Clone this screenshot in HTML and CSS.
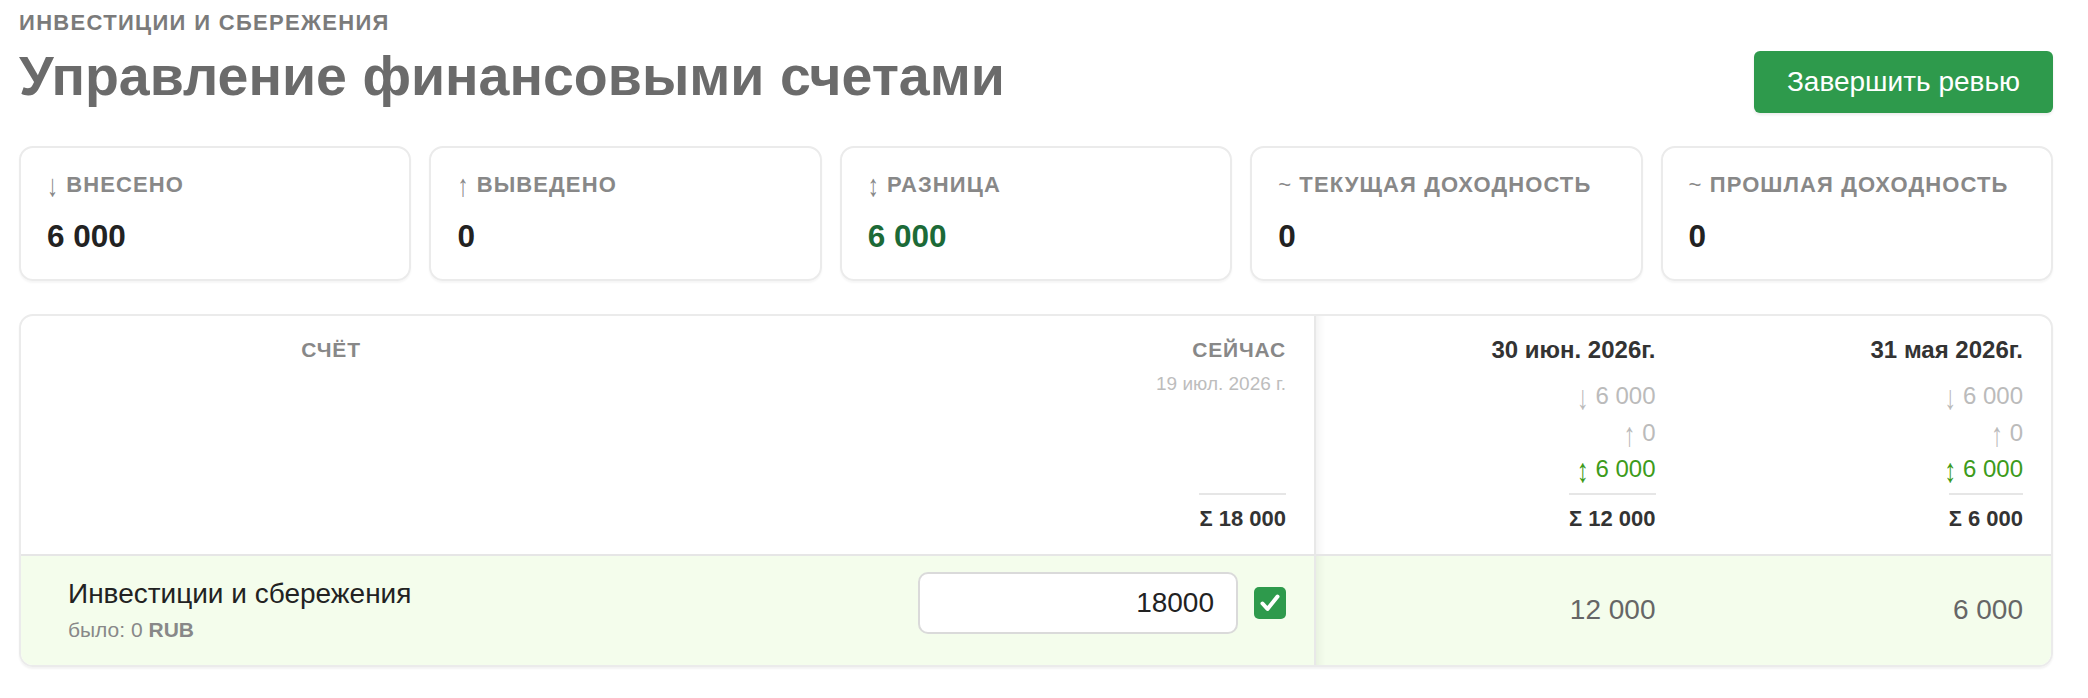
FILE: index.html
```html
<!DOCTYPE html>
<html lang="ru">
<head>
    <meta charset="UTF-8">
    <meta name="viewport" content="width=device-width, initial-scale=1.0">
    <title>Управление финансовыми счетами</title>
    <link rel="stylesheet" href="styles.css">
</head>
<body>

<div class="page">

    <header class="page-head">
        <div class="eyebrow">Инвестиции и сбережения</div>
        <div class="head-row">
            <h1>Управление финансовыми счетами</h1>
            <button class="btn-finish">Завершить ревью</button>
        </div>
    </header>

    <section class="stats">
        <div class="stat">
            <div class="stat-label"><span class="arr">↓</span> Внесено</div>
            <div class="stat-value">6&nbsp;000</div>
        </div>
        <div class="stat">
            <div class="stat-label"><span class="arr">↑</span> Выведено</div>
            <div class="stat-value">0</div>
        </div>
        <div class="stat">
            <div class="stat-label"><span class="arr">↕</span> Разница</div>
            <div class="stat-value positive">6&nbsp;000</div>
        </div>
        <div class="stat">
            <div class="stat-label"><span class="tilde">~</span> Текущая доходность</div>
            <div class="stat-value">0</div>
        </div>
        <div class="stat">
            <div class="stat-label"><span class="tilde">~</span> Прошлая доходность</div>
            <div class="stat-value">0</div>
        </div>
    </section>

    <section class="review">
        <!-- header row -->
        <div class="th th-account">Счёт</div>
        <div class="th th-now">
            <div class="th-title">Сейчас</div>
            <div class="th-date">19 июл. 2026 г.</div>
            <div class="th-sum">Σ 18&nbsp;000</div>
        </div>
        <div class="th th-period first-period">
            <div class="th-period-title">30 июн. 2026г.</div>
            <div class="flow in"><span class="arr">↓</span> 6&nbsp;000</div>
            <div class="flow out"><span class="arr">↑</span> 0</div>
            <div class="flow diff"><span class="arr">↕</span> 6&nbsp;000</div>
            <div class="th-sum">Σ 12&nbsp;000</div>
        </div>
        <div class="th th-period">
            <div class="th-period-title">31 мая 2026г.</div>
            <div class="flow in"><span class="arr">↓</span> 6&nbsp;000</div>
            <div class="flow out"><span class="arr">↑</span> 0</div>
            <div class="flow diff"><span class="arr">↕</span> 6&nbsp;000</div>
            <div class="th-sum">Σ 6&nbsp;000</div>
        </div>

        <!-- account row -->
        <div class="td td-account">
            <div class="account-name">Инвестиции и сбережения</div>
            <div class="account-was">было: 0 <b>RUB</b></div>
        </div>
        <div class="td td-now">
            <input class="amount-input" type="text" value="18000">
            <span class="check">
                <svg width="32" height="32" viewBox="0 0 32 32">
                    <rect width="32" height="32" rx="5" fill="#2e9a4c"/>
                    <path d="M8.5 16.5 L13.5 22 L23.5 9.5" fill="none" stroke="#fff" stroke-width="4" stroke-linecap="round" stroke-linejoin="round"/>
                </svg>
            </span>
        </div>
        <div class="td td-period first-period">12&nbsp;000</div>
        <div class="td td-period">6&nbsp;000</div>
    </section>

</div>

</body>
</html>
```

FILE: styles.css
```css
* {
    box-sizing: border-box;
}

body {
    margin: 0;
    font-family: "Liberation Sans", Arial, sans-serif;
    color: #222;
    background-color: #fff;
}

.page {
    padding: 10px 35px 40px 19px;
}

/* thin arrows, stretched a bit to reach below the baseline */
.arr {
    display: inline-block;
    font-weight: normal;
    transform: scaleY(1.4) translateY(1px);
}

/* header */

.eyebrow {
    font-size: 22px;
    line-height: 25px;
    font-weight: bold;
    color: #7b7b7b;
    text-transform: uppercase;
    letter-spacing: 0.06em;
}

.head-row {
    display: flex;
    justify-content: space-between;
    align-items: flex-start;
    margin-top: 6px;
}

.head-row h1 {
    margin: 0;
    font-size: 55.5px;
    line-height: 70px;
    color: #6b6b6b;
}

.btn-finish {
    margin-top: 10px;
    height: 62px;
    padding: 0 33px;
    font-family: inherit;
    font-size: 28px;
    color: white;
    background-color: #2e9a4c;
    border: none;
    border-radius: 6px;
    box-shadow: 0 2px 3px rgba(0, 0, 0, 0.08);
    cursor: pointer;
}

/* summary cards */

.stats {
    display: grid;
    grid-template-columns: repeat(5, 1fr);
    gap: 18px;
    margin-top: 33px;
}

.stat {
    border: 2px solid #ebebeb;
    border-radius: 14px;
    padding: 24px 26px 24px;
    box-shadow: 0 2px 2px rgba(0, 0, 0, 0.04);
}

.stat-label {
    font-size: 22px;
    line-height: 25px;
    font-weight: bold;
    color: #888;
    text-transform: uppercase;
    letter-spacing: 0.05em;
}

.stat-label .tilde {
    font-weight: normal;
}

.stat-value {
    margin-top: 20px;
    font-size: 31.5px;
    line-height: 38px;
    font-weight: bold;
    color: #222;
}

.stat-value.positive {
    color: #1c6a37;
}

/* accounts table */

.review {
    display: grid;
    grid-template-columns: 620px 675px 1fr 1fr;
    margin-top: 33px;
    border: 2px solid #ebebeb;
    border-radius: 14px;
    overflow: hidden;
    box-shadow: 0 2px 2px rgba(0, 0, 0, 0.05);
}

.th {
    display: flex;
    flex-direction: column;
    align-items: flex-end;
    padding: 20px 28px 22px;
    text-align: right;
}

.th-account {
    align-items: center;
    font-size: 21px;
    line-height: 27px;
    font-weight: bold;
    color: #888;
    text-transform: uppercase;
    letter-spacing: 0.04em;
}

.th-now,
.td-now {
    border-right: 2px solid #e8e8e8;
}

.first-period {
    box-shadow: inset 12px 0 10px -10px rgba(0, 0, 0, 0.07);
}

.th-title {
    font-size: 21px;
    line-height: 27px;
    font-weight: bold;
    color: #888;
    text-transform: uppercase;
    letter-spacing: 0.04em;
}

.th-date {
    margin-top: 6px;
    font-size: 19px;
    line-height: 29px;
    color: #bdbdbd;
}

.th-period-title {
    font-size: 24px;
    line-height: 27px;
    font-weight: bold;
    color: #333;
}

.flow {
    font-size: 24px;
    line-height: 36.5px;
    color: #bbb;
}

.flow.in {
    margin-top: 15px;
}

.flow.diff {
    color: #3d9b1b;
}

.th-sum {
    margin-top: auto;
    padding-top: 11px;
    border-top: 2px solid #e6e6e6;
    font-size: 22px;
    line-height: 26px;
    font-weight: bold;
    color: #333;
}

.th-period .th-sum {
    margin-top: 5px;
}

.td {
    display: flex;
    align-items: center;
    min-height: 111px;
    border-top: 2px solid #e6e6e6;
    background-color: #f4fdec;
}

.td-account {
    flex-direction: column;
    align-items: flex-start;
    justify-content: center;
    padding: 0 0 0 47px;
}

.account-name {
    font-size: 28px;
    line-height: 34px;
    color: #222;
}

.account-was {
    margin-top: 5px;
    font-size: 21px;
    line-height: 27px;
    color: #888;
}

.td-now {
    justify-content: flex-end;
    gap: 16px;
    padding: 0 28px 14px 0;
}

.amount-input {
    width: 320px;
    height: 62px;
    padding: 0 22px;
    font-family: inherit;
    font-size: 28px;
    color: #222;
    text-align: right;
    background-color: white;
    border: 2px solid #dadada;
    border-radius: 10px;
}

.check {
    display: flex;
}

.td-period {
    justify-content: flex-end;
    padding-right: 28px;
    font-size: 28px;
    color: #666;
}
```
